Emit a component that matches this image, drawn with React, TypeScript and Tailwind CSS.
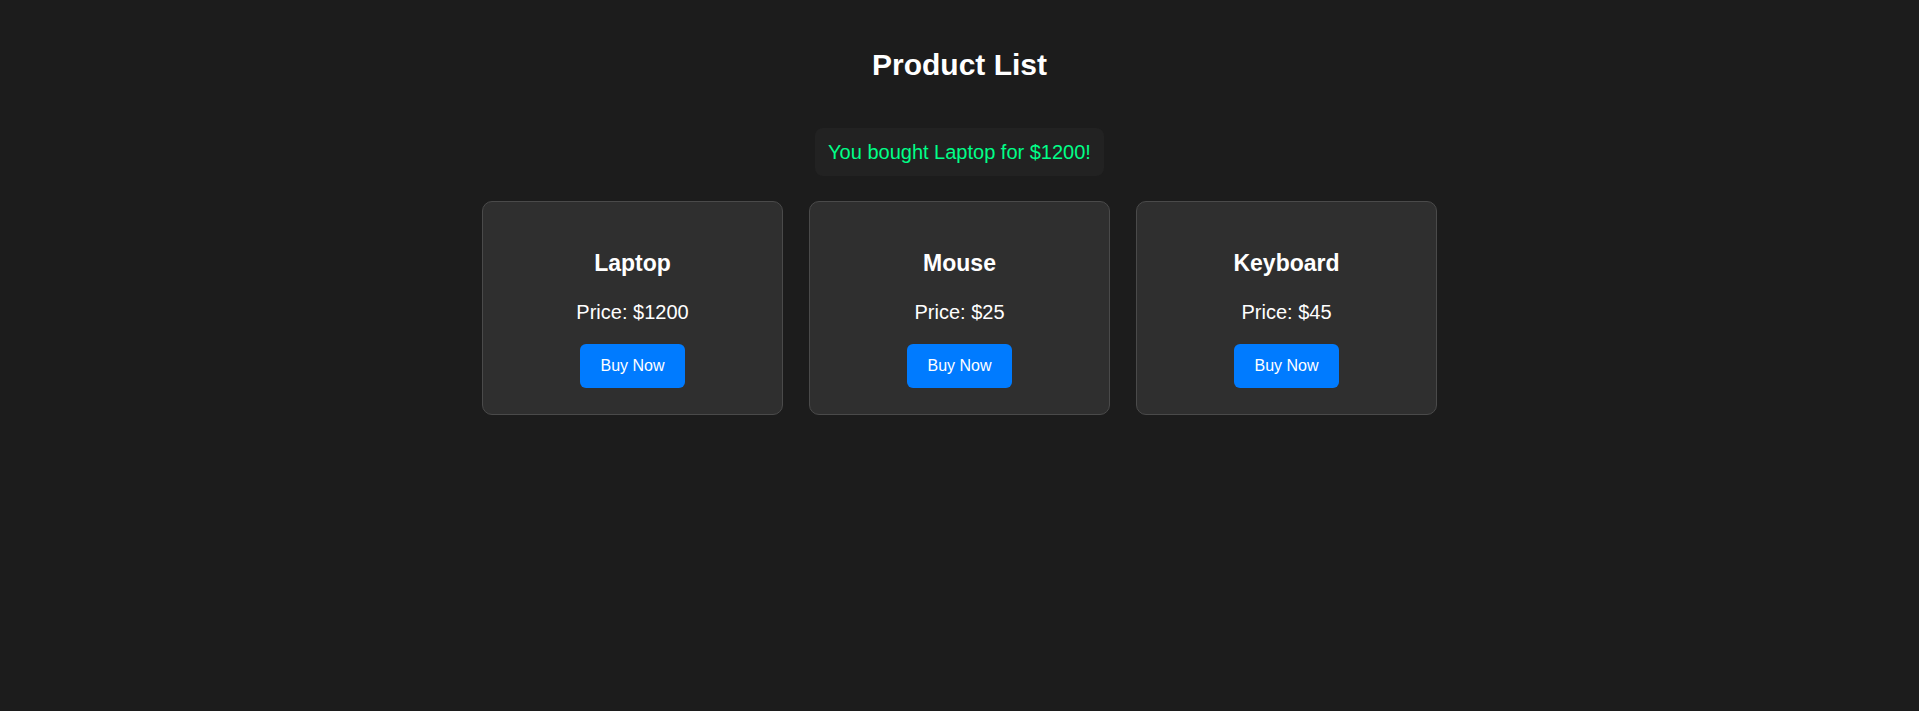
const products = [
  { name: "Laptop", price: 1200 },
  { name: "Mouse", price: 25 },
  { name: "Keyboard", price: 45 },
];

export default function App() {
  return (
    <div className="flex min-h-screen flex-col items-center bg-[#1c1c1c] pt-[48px] font-['Liberation_Sans',Arial,sans-serif] text-white">
      <h2 className="text-[30px] font-bold leading-[34px]">Product List</h2>

      <div className="mt-[46px] flex h-[48px] items-center rounded-lg bg-[#222222] px-[13px] text-[20px] text-[#00ff88]">
        You bought Laptop for $1200!
      </div>

      <div className="mt-[25px] flex gap-[26px]">
        {products.map((p) => (
          <div
            key={p.name}
            className="flex h-[214px] w-[301px] flex-col items-center rounded-[10px] border border-[#4a4a4a] bg-[#2f2f2f] pt-[48px]"
          >
            <h3 className="text-[23px] font-bold leading-[27px]">{p.name}</h3>
            <p className="mt-[24px] text-[20px] leading-[23px]">Price: ${p.price}</p>
            <button className="mt-[20px] h-[44px] rounded-md bg-[#007bff] px-5 text-[16px] text-white">
              Buy Now
            </button>
          </div>
        ))}
      </div>
    </div>
  );
}
